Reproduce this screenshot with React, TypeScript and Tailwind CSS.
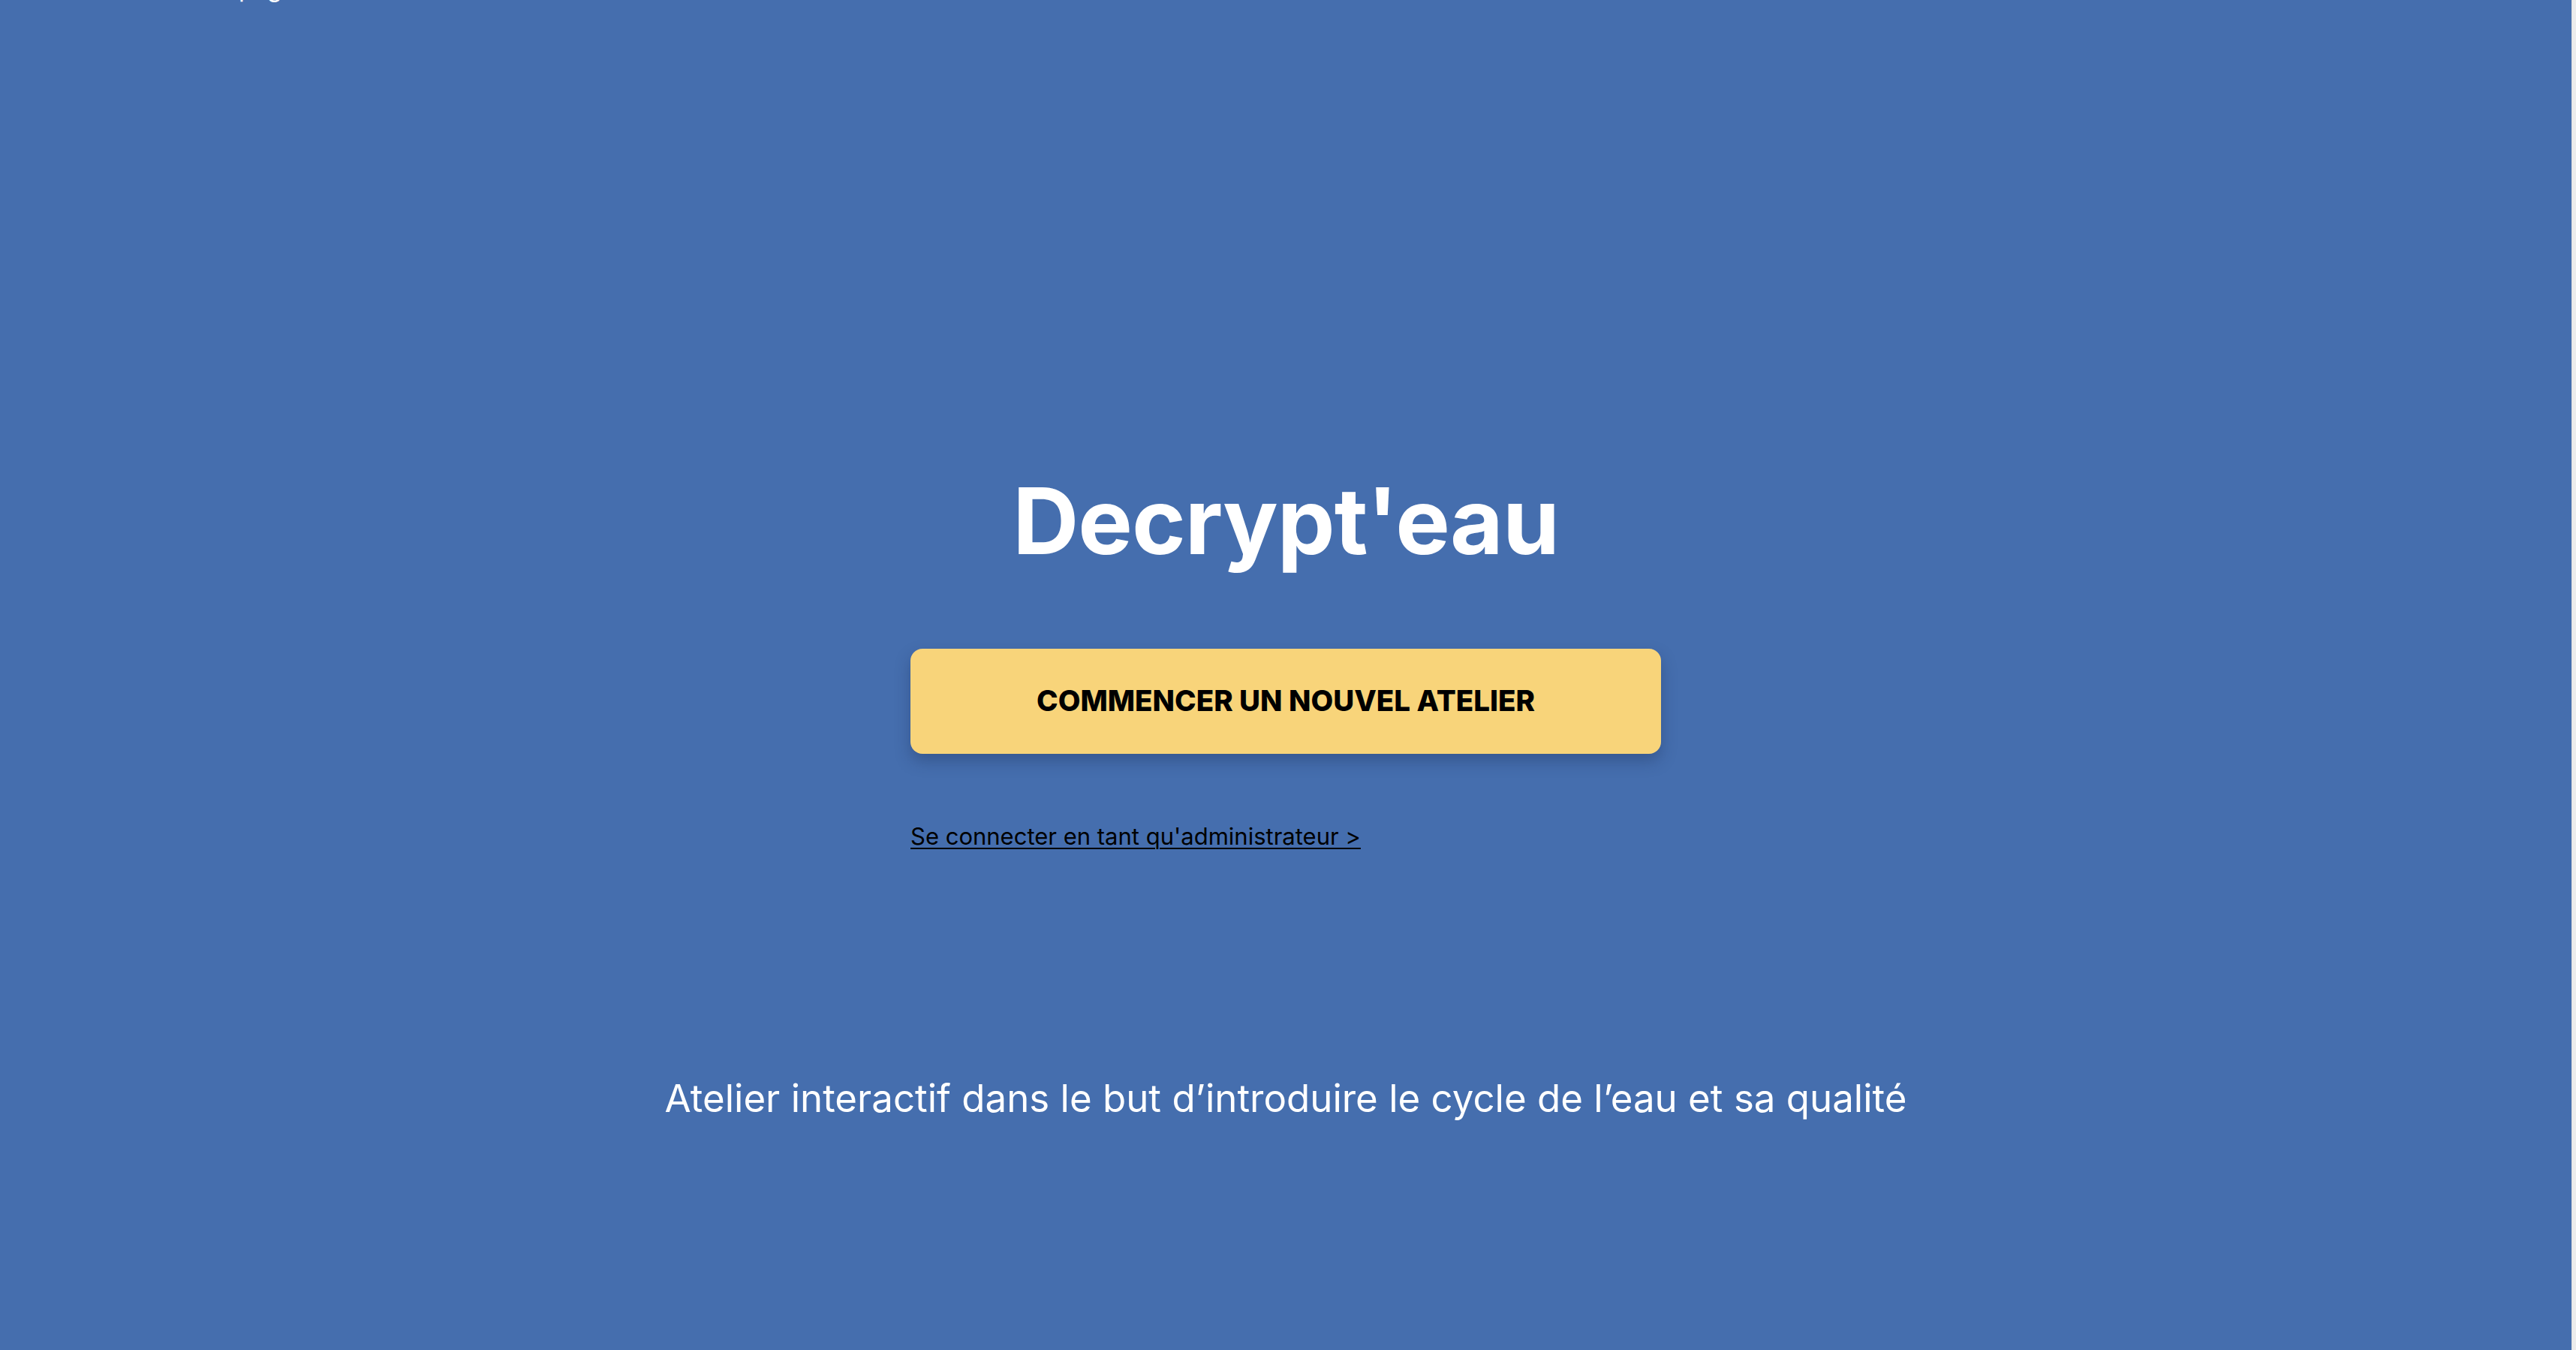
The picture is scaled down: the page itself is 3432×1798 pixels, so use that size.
export default function App() {
  return (
    <div className="flex w-full h-[1798px] overflow-hidden" style={{ fontFamily: 'Inter, "Noto Sans", sans-serif' }}>
      <main className="flex-1 h-full bg-[#456eae] flex flex-col">
        {/* texte coupé en haut de page */}
        <p className="-mt-[31px] pl-[318px] text-[32px] leading-[32px] text-white">page</p>

        <div className="flex flex-col items-center mt-[632px]">
          <h1 className="text-[122px] leading-none font-bold tracking-[-1px] text-white">Decrypt'eau</h1>

          <div className="w-[1000px] flex flex-col mt-[109px]">
            <button className="h-[140px] w-full rounded-[16px] bg-[#f8d47a] shadow-[0_10px_20px_rgba(30,50,90,0.35)] text-[38.5px] font-extrabold text-black">
              COMMENCER UN NOUVEL ATELIER
            </button>
            <a href="#" className="mt-[94px] self-start text-[31px] leading-none text-black underline underline-offset-[4px] decoration-[2px]">
              Se connecter en tant qu'administrateur &gt;
            </a>
          </div>

          <p className="mt-[308px] text-[51px] leading-none text-white">
            Atelier interactif dans le but d’introduire le cycle de l’eau et sa qualité
          </p>
        </div>
      </main>
      <div className="w-[6px] h-full bg-[#ececec] border-l border-[#e2e2e2]" />
    </div>
  );
}
